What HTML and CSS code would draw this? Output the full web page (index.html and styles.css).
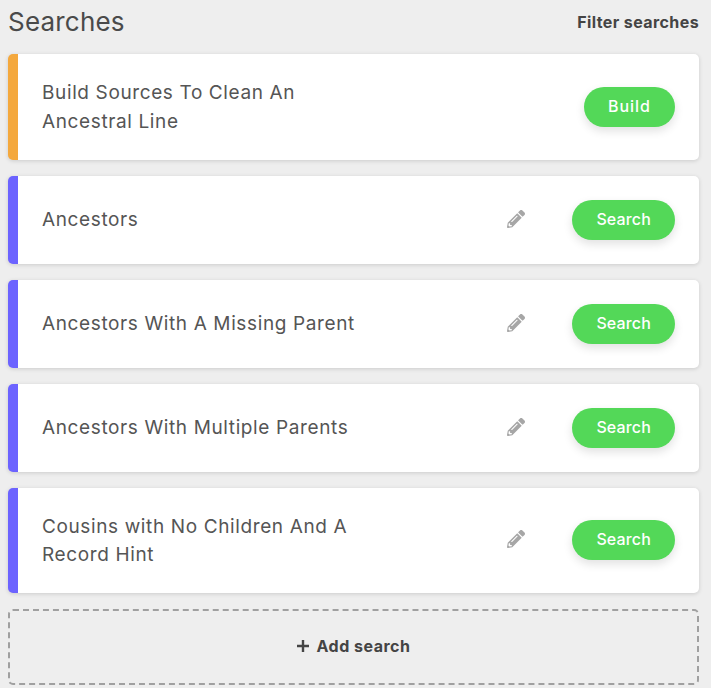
FILE: index.html
```html
<!DOCTYPE html>
<html lang="en">
<head>
<meta charset="utf-8">
<title>Searches</title>
<link rel="stylesheet" href="styles.css">
</head>
<body>
<main class="page">
  <header class="head">
    <h1 class="heading">Searches</h1>
    <a class="filter">Filter searches</a>
  </header>
  <section class="list">
    <article class="card card-build">
      <h2 class="name">Build Sources To Clean An Ancestral Line</h2>
      <button class="btn btn-build">Build</button>
    </article>
    <article class="card">
      <h2 class="name">Ancestors</h2>
      <svg class="edit" viewBox="0 0 512 512"><path d="M497.9 142.1l-46.1 46.1c-4.7 4.7-12.3 4.7-17 0l-111-111c-4.7-4.7-4.7-12.3 0-17l46.1-46.1c18.7-18.7 49.1-18.7 67.9 0l60.1 60.1c18.8 18.7 18.8 49.1 0 67.9zM284.2 99.8L21.6 362.4.4 483.9c-2.9 16.4 11.4 30.6 27.8 27.8l121.5-21.3 262.6-262.6c4.7-4.7 4.7-12.3 0-17l-111-111c-4.8-4.7-12.4-4.7-17.1 0zM124.1 339.9c-5.5-5.5-5.5-14.3 0-19.8l154-154c5.5-5.5 14.3-5.5 19.8 0s5.5 14.3 0 19.8l-154 154c-5.5 5.5-14.3 5.5-19.8 0zM88 424h48v36.3l-64.5 11.3-31.1-31.1L51.7 376H88v48z"/></svg>
      <button class="btn">Search</button>
    </article>
    <article class="card">
      <h2 class="name">Ancestors With A Missing Parent</h2>
      <svg class="edit" viewBox="0 0 512 512"><path d="M497.9 142.1l-46.1 46.1c-4.7 4.7-12.3 4.7-17 0l-111-111c-4.7-4.7-4.7-12.3 0-17l46.1-46.1c18.7-18.7 49.1-18.7 67.9 0l60.1 60.1c18.8 18.7 18.8 49.1 0 67.9zM284.2 99.8L21.6 362.4.4 483.9c-2.9 16.4 11.4 30.6 27.8 27.8l121.5-21.3 262.6-262.6c4.7-4.7 4.7-12.3 0-17l-111-111c-4.8-4.7-12.4-4.7-17.1 0zM124.1 339.9c-5.5-5.5-5.5-14.3 0-19.8l154-154c5.5-5.5 14.3-5.5 19.8 0s5.5 14.3 0 19.8l-154 154c-5.5 5.5-14.3 5.5-19.8 0zM88 424h48v36.3l-64.5 11.3-31.1-31.1L51.7 376H88v48z"/></svg>
      <button class="btn">Search</button>
    </article>
    <article class="card">
      <h2 class="name">Ancestors With Multiple Parents</h2>
      <svg class="edit" viewBox="0 0 512 512"><path d="M497.9 142.1l-46.1 46.1c-4.7 4.7-12.3 4.7-17 0l-111-111c-4.7-4.7-4.7-12.3 0-17l46.1-46.1c18.7-18.7 49.1-18.7 67.9 0l60.1 60.1c18.8 18.7 18.8 49.1 0 67.9zM284.2 99.8L21.6 362.4.4 483.9c-2.9 16.4 11.4 30.6 27.8 27.8l121.5-21.3 262.6-262.6c4.7-4.7 4.7-12.3 0-17l-111-111c-4.8-4.7-12.4-4.7-17.1 0zM124.1 339.9c-5.5-5.5-5.5-14.3 0-19.8l154-154c5.5-5.5 14.3-5.5 19.8 0s5.5 14.3 0 19.8l-154 154c-5.5 5.5-14.3 5.5-19.8 0zM88 424h48v36.3l-64.5 11.3-31.1-31.1L51.7 376H88v48z"/></svg>
      <button class="btn">Search</button>
    </article>
    <article class="card">
      <h2 class="name">Cousins with No Children And A Record Hint</h2>
      <svg class="edit" viewBox="0 0 512 512"><path d="M497.9 142.1l-46.1 46.1c-4.7 4.7-12.3 4.7-17 0l-111-111c-4.7-4.7-4.7-12.3 0-17l46.1-46.1c18.7-18.7 49.1-18.7 67.9 0l60.1 60.1c18.8 18.7 18.8 49.1 0 67.9zM284.2 99.8L21.6 362.4.4 483.9c-2.9 16.4 11.4 30.6 27.8 27.8l121.5-21.3 262.6-262.6c4.7-4.7 4.7-12.3 0-17l-111-111c-4.8-4.7-12.4-4.7-17.1 0zM124.1 339.9c-5.5-5.5-5.5-14.3 0-19.8l154-154c5.5-5.5 14.3-5.5 19.8 0s5.5 14.3 0 19.8l-154 154c-5.5 5.5-14.3 5.5-19.8 0zM88 424h48v36.3l-64.5 11.3-31.1-31.1L51.7 376H88v48z"/></svg>
      <button class="btn">Search</button>
    </article>
    <a class="add">
      <svg class="plus" viewBox="0 0 12 12"><path d="M4.8 0h2.4v4.8H12v2.4H7.2V12H4.8V7.2H0V4.8h4.8z"/></svg>
      <span>Add search</span>
    </a>
  </section>
</main>
</body>
</html>
```
FILE: styles.css
```css
* { box-sizing: border-box; }
html, body { margin: 0; height: 100%; }
body {
  background: #eeeeee;
  color: #444444;
  font-family: Inter, "Liberation Sans", sans-serif;
  overflow: hidden;
}
.page { padding: 0 12px 0 8px; }
.head {
  display: flex;
  justify-content: space-between;
  align-items: center;
  height: 54px;
  padding-bottom: 11px;
}
.heading {
  margin: 0;
  font-size: 26px;
  font-weight: 400;
  letter-spacing: 0.2px;
  color: #4a4a4a;
}
.filter {
  font-size: 16px;
  font-weight: 700;
  letter-spacing: 0.4px;
  color: #444444;
}
.list { display: flex; flex-direction: column; gap: 16px; }
.card {
  display: flex;
  align-items: center;
  background: #ffffff;
  border-left: 10px solid #6c63ff;
  border-radius: 5px;
  padding: 24px;
  box-shadow: 0 1px 4px rgba(0, 0, 0, 0.15);
}
.card-build { border-left-color: #f4a83d; }
.name {
  margin: 1px auto -1px 0;
  width: 330px;
  font-size: 19px;
  font-weight: 400;
  line-height: 28.8px;
  letter-spacing: 0.62px;
  color: #555555;
}
.edit {
  width: 18px;
  height: 18px;
  margin: 0 47px 2px 0;
  fill: #a6a6a6;
  flex: none;
}
.btn {
  height: 40px;
  padding: 0 24px 2px;
  border: 0;
  border-radius: 20px;
  background: #53d858;
  color: #ffffff;
  font: 500 16px Inter, "Liberation Sans", sans-serif;
  letter-spacing: 0.15px;
  box-shadow: 0 4px 10px rgba(0, 0, 0, 0.12);
  flex: none;
}
.btn-build { letter-spacing: 1px; }
.add {
  display: flex;
  align-items: center;
  justify-content: center;
  gap: 8px;
  height: 76px;
  padding-bottom: 2px;
  border: 2px dashed #a0a0a0;
  border-radius: 5px;
  font-size: 16px;
  font-weight: 700;
  letter-spacing: 0.5px;
  color: #444444;
}
.plus { width: 12px; height: 12px; fill: #444444; }
```
